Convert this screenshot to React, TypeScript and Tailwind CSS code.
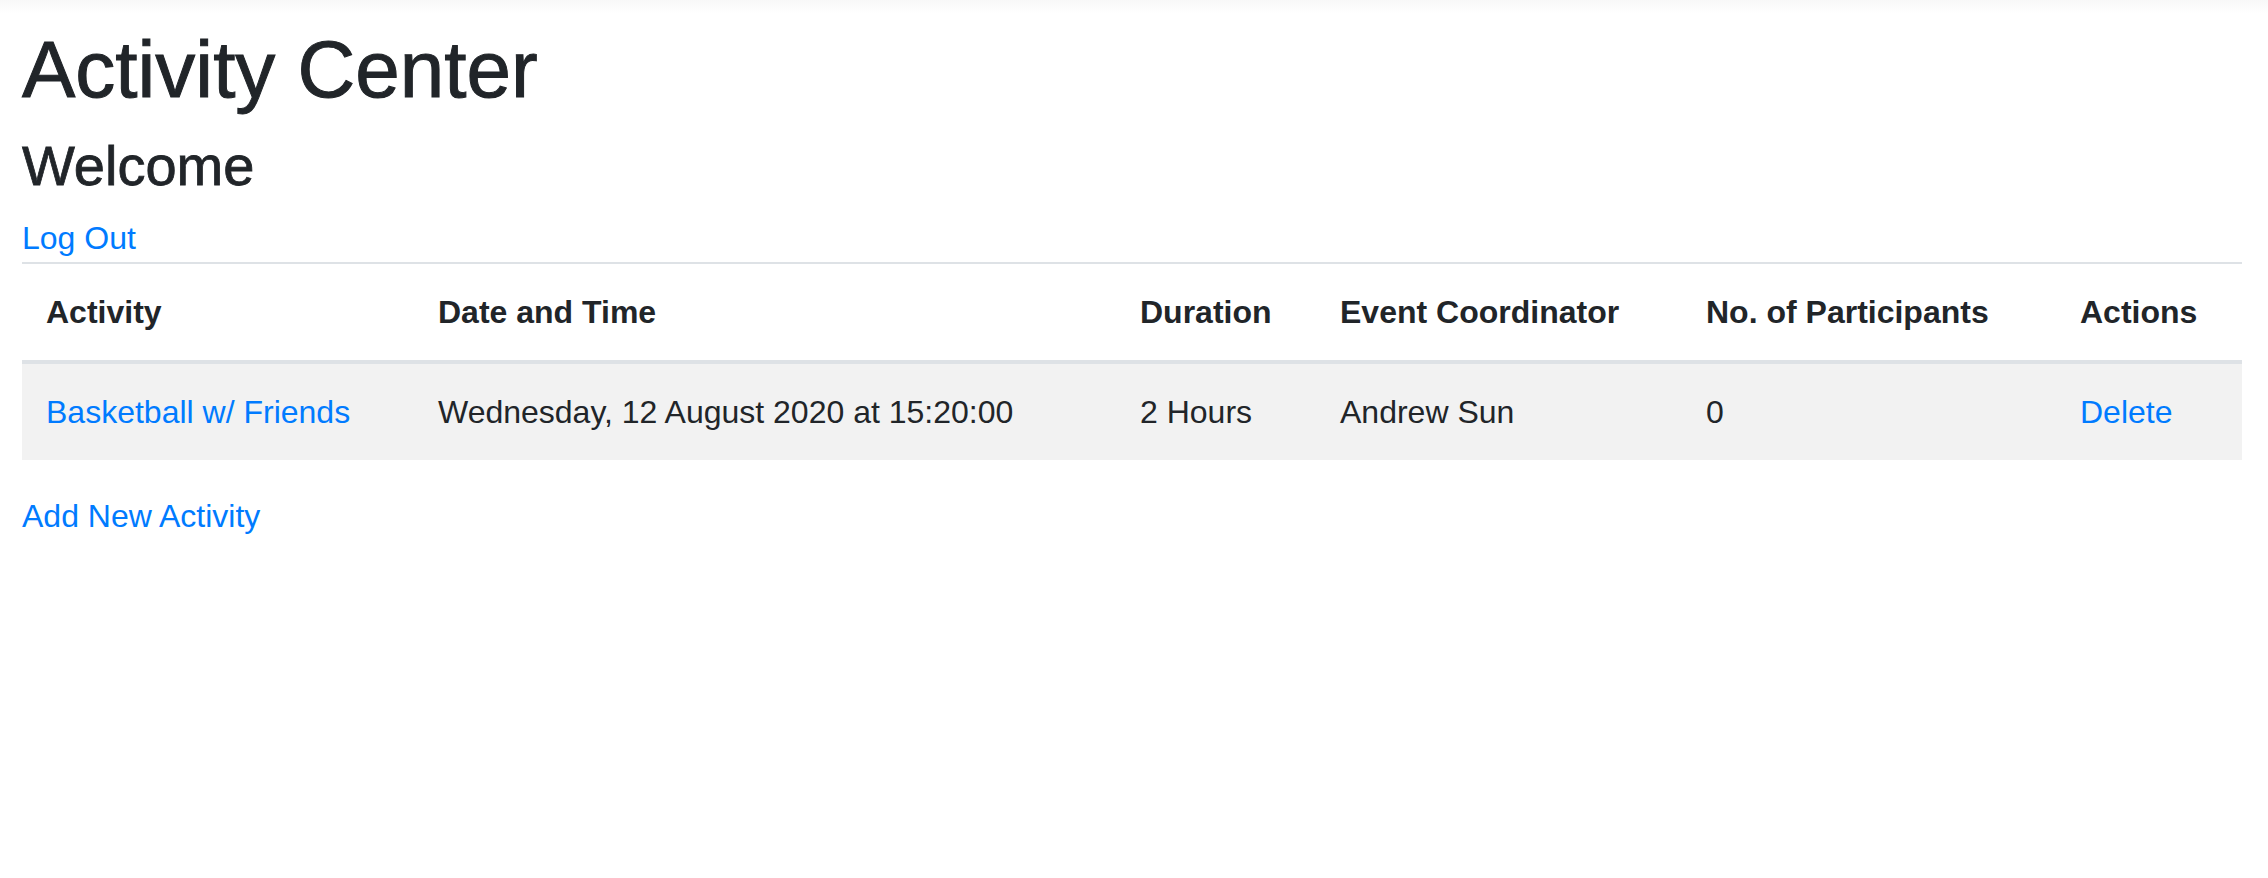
const activities = [
  {
    id: 1,
    name: "Basketball w/ Friends",
    fecha: "Wednesday, 12 August 2020 at 15:20:00",
    duration: "2 Hours",
    coordinator: "Andrew Sun",
    participants: 0,
  },
];

const cols = [
  { label: "Activity", width: "w-[392px]" },
  { label: "Date and Time", width: "w-[702px]" },
  { label: "Duration", width: "w-[200px]" },
  { label: "Event Coordinator", width: "w-[366px]" },
  { label: "No. of Participants", width: "w-[374px]" },
  { label: "Actions", width: "w-[186px]" },
];

export default function App() {
  return (
    <div className="min-h-[878px] bg-white bg-[linear-gradient(to_bottom,#f8f8f8,#ffffff_14px)] pl-[22px] pr-[26px] pt-[22px] font-['Liberation_Sans',Arial,sans-serif] text-[#212529]">
      <h1 className="mb-[14px] text-[80px] leading-[96px] [-webkit-text-stroke:1px_#212529]">
        Activity Center
      </h1>
      <h3 className="mb-[15px] text-[56px] leading-[67px] [-webkit-text-stroke:0.8px_#212529]">
        Welcome
      </h3>
      <div className="text-[32px] leading-[48px]">
        <a href="#" className="text-[#007bff]">
          Log Out
        </a>
      </div>

      <table className="mb-8 w-full table-fixed border-collapse text-[32px] leading-[48px]">
        <colgroup>
          {cols.map((c) => (
            <col key={c.label} className={c.width} />
          ))}
        </colgroup>
        <thead>
          <tr>
            {cols.map((c) => (
              <th
                key={c.label}
                className="border-t-2 border-b-4 border-[#dee2e6] px-6 py-6 text-left align-bottom font-bold whitespace-nowrap"
              >
                {c.label}
              </th>
            ))}
          </tr>
        </thead>
        <tbody>
          {activities.map((a) => (
            <tr key={a.id} className="bg-[#f2f2f2]">
              <td className="px-6 py-6">
                <a href="#" className="text-[#007bff]">
                  {a.name}
                </a>
              </td>
              <td className="px-6 py-6 whitespace-nowrap">{a.fecha}</td>
              <td className="px-6 py-6">{a.duration}</td>
              <td className="px-6 py-6">{a.coordinator}</td>
              <td className="px-6 py-6">{a.participants}</td>
              <td className="px-6 py-6">
                <a href="#" className="text-[#007bff]">
                  Delete
                </a>
              </td>
            </tr>
          ))}
        </tbody>
      </table>

      <a href="#" className="text-[32px] leading-[48px] text-[#007bff]">
        Add New Activity
      </a>
    </div>
  );
}
